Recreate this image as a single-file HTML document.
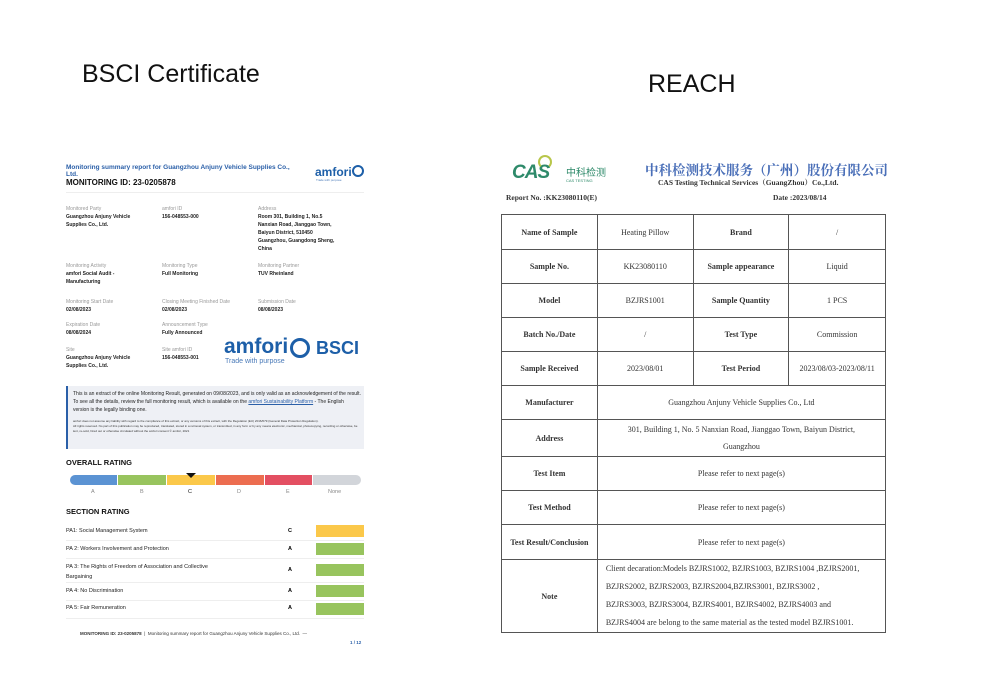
<!DOCTYPE html>
<html><head><meta charset="utf-8"><style>
*{margin:0;padding:0;box-sizing:border-box}
body{width:988px;height:694px;background:#fff;position:relative;overflow:hidden;font-family:"Liberation Sans",sans-serif}
.a{position:absolute;white-space:nowrap}
.s{font-size:5px;color:#222;font-weight:bold;line-height:8px}
.l{font-size:5px;color:#999;line-height:8px}
.sf{font-family:"Liberation Serif","Noto Serif CJK SC",serif}
table{border-collapse:collapse;position:absolute;left:501px;top:214px;width:385px}
td{border:1px solid #555;font-family:"Liberation Serif",serif;font-size:8px;text-align:center;color:#333}
td.b{font-weight:bold}
</style></head><body>
<div class="a" style="left:82px;top:60px;font-size:25px;color:#111">BSCI Certificate</div>
<div class="a" style="left:648px;top:70px;font-size:25px;color:#111">REACH</div>

<div class="a" style="left:66px;top:164px;font-size:6.5px;color:#2a5fa8;font-weight:bold;line-height:7px">Monitoring summary report for Guangzhou Anjuny Vehicle Supplies Co.,<br>Ltd.</div>
<div class="a" style="left:66px;top:178px;font-size:8px;color:#111;font-weight:bold">MONITORING ID: 23-0205878</div>
<div class="a" style="left:315px;top:165px;font-size:12px;color:#1d5fa8;font-weight:bold">amfori</div>
<div class="a" style="left:352px;top:165px;width:12px;height:12px;border:2px solid #1d5fa8;border-radius:50%"></div>
<div class="a" style="left:316px;top:178px;font-size:3px;color:#4a7ab8">Trade with purpose</div>
<div class="a" style="left:66px;top:192px;width:298px;height:1px;background:#eee"></div>

<div class="a l" style="left:66px;top:205px">Monitored Party</div>
<div class="a s" style="left:66px;top:213px">Guangzhou Anjuny Vehicle<br>Supplies Co., Ltd.</div>
<div class="a l" style="left:162px;top:205px">amfori ID</div>
<div class="a s" style="left:162px;top:213px">156-048553-000</div>
<div class="a l" style="left:258px;top:205px">Address</div>
<div class="a s" style="left:258px;top:213px">Room 301, Building 1, No.5<br>Nanxian Road, Jianggao Town,<br>Baiyun District, 510450<br>Guangzhou, Guangdong Sheng,<br>China</div>
<div class="a l" style="left:66px;top:262px">Monitoring Activity</div>
<div class="a s" style="left:66px;top:270px">amfori Social Audit -<br>Manufacturing</div>
<div class="a l" style="left:162px;top:262px">Monitoring Type</div>
<div class="a s" style="left:162px;top:270px">Full Monitoring</div>
<div class="a l" style="left:258px;top:262px">Monitoring Partner</div>
<div class="a s" style="left:258px;top:270px">TUV Rheinland</div>
<div class="a l" style="left:66px;top:298px">Monitoring Start Date</div>
<div class="a s" style="left:66px;top:306px">02/08/2023</div>
<div class="a l" style="left:162px;top:298px">Closing Meeting Finished Date</div>
<div class="a s" style="left:162px;top:306px">02/08/2023</div>
<div class="a l" style="left:258px;top:298px">Submission Date</div>
<div class="a s" style="left:258px;top:306px">08/08/2023</div>
<div class="a l" style="left:66px;top:321px">Expiration Date</div>
<div class="a s" style="left:66px;top:329px">08/08/2024</div>
<div class="a l" style="left:162px;top:321px">Announcement Type</div>
<div class="a s" style="left:162px;top:329px">Fully Announced</div>
<div class="a l" style="left:66px;top:346px">Site</div>
<div class="a s" style="left:66px;top:354px">Guangzhou Anjuny Vehicle<br>Supplies Co., Ltd.</div>
<div class="a l" style="left:162px;top:346px">Site amfori ID</div>
<div class="a s" style="left:162px;top:354px">156-048553-001</div>
<div class="a" style="left:224px;top:335px;font-size:21px;color:#1d5fa8;font-weight:bold">amfori</div>
<div class="a" style="left:290px;top:338px;width:20px;height:20px;border:3px solid #1d5fa8;border-radius:50%"></div>
<div class="a" style="left:316px;top:338px;font-size:18px;color:#1d5fa8;font-weight:bold">BSCI</div>
<div class="a" style="left:225px;top:358px;font-size:7px;color:#4a7ab8">Trade with purpose</div>

<div class="a" style="left:66px;top:386px;width:298px;height:63px;background:#eef0f5;border-left:2px solid #2a5fa8"></div>
<div class="a" style="left:73px;top:390px;font-size:5px;color:#222;line-height:8px;white-space:normal;width:288px">This is an extract of the online Monitoring Result, generated on 09/08/2023, and is only valid as an acknowledgement of the result. To see all the details, review the full monitoring result, which is available on the <span style="color:#2a5fa8;text-decoration:underline">amfori Sustainability Platform</span> - The English version is the legally binding one.</div>
<div class="a" style="left:73px;top:419px;font-size:3px;color:#333;line-height:5px;white-space:normal;width:288px">amfori does not assume any liability with regard to the compliance of this extract, or any versions of this extract, with the Regulation (EU) 2016/679 (General Data Protection Regulation).<br>All rights reserved. No part of this publication may be reproduced, translated, stored in a retrieval system, or transmitted, in any form or by any means electronic, mechanical, photocopying, recording or otherwise, be lent, re-sold, hired out or otherwise circulated without the amfori consent © amfori, 2021</div>

<div class="a" style="left:66px;top:458px;font-size:7.5px;font-weight:bold;color:#111">OVERALL RATING</div>
<div class="a" style="left:70px;top:475px;width:47px;height:10px;background:#5b93d3;border-radius:5px 0 0 5px"></div>
<div class="a" style="left:118px;top:475px;width:48px;height:10px;background:#98c45e"></div>
<div class="a" style="left:167px;top:475px;width:48px;height:10px;background:#fbc84a"></div>
<div class="a" style="left:216px;top:475px;width:48px;height:10px;background:#ec6d50"></div>
<div class="a" style="left:265px;top:475px;width:47px;height:10px;background:#e34f62"></div>
<div class="a" style="left:313px;top:475px;width:48px;height:10px;background:#d2d5da;border-radius:0 5px 5px 0"></div>
<div class="a" style="left:186px;top:473px;border-left:5px solid transparent;border-right:5px solid transparent;border-top:5px solid #111;width:0"></div>
<div class="a" style="left:91px;top:489px;font-size:5.5px;color:#888">A</div>
<div class="a" style="left:140px;top:489px;font-size:5.5px;color:#888">B</div>
<div class="a" style="left:188px;top:489px;font-size:5.5px;color:#111">C</div>
<div class="a" style="left:237px;top:489px;font-size:5.5px;color:#888">D</div>
<div class="a" style="left:286px;top:489px;font-size:5.5px;color:#888">E</div>
<div class="a" style="left:328px;top:489px;font-size:5.5px;color:#888">None</div>
<div class="a" style="left:66px;top:507px;font-size:7.5px;font-weight:bold;color:#111">SECTION RATING</div>

<div class="a" style="left:66px;top:528px;font-size:5.5px;color:#222">PA1: Social Management System</div>
<div class="a" style="left:288px;top:528px;font-size:5.5px;font-weight:bold">C</div>
<div class="a" style="left:316px;top:525px;width:48px;height:12px;background:#fbc84a"></div>
<div class="a" style="left:66px;top:540px;width:298px;height:1px;background:#eee"></div>
<div class="a" style="left:66px;top:546px;font-size:5.5px;color:#222">PA 2: Workers Involvement and Protection</div>
<div class="a" style="left:288px;top:546px;font-size:5.5px;font-weight:bold">A</div>
<div class="a" style="left:316px;top:543px;width:48px;height:12px;background:#98c45e"></div>
<div class="a" style="left:66px;top:558px;width:298px;height:1px;background:#eee"></div>
<div class="a" style="left:66px;top:562px;font-size:5.5px;color:#222;line-height:10px">PA 3: The Rights of Freedom of Association and Collective<br>Bargaining</div>
<div class="a" style="left:288px;top:567px;font-size:5.5px;font-weight:bold">A</div>
<div class="a" style="left:316px;top:564px;width:48px;height:12px;background:#98c45e"></div>
<div class="a" style="left:66px;top:582px;width:298px;height:1px;background:#eee"></div>
<div class="a" style="left:66px;top:588px;font-size:5.5px;color:#222">PA 4: No Discrimination</div>
<div class="a" style="left:288px;top:588px;font-size:5.5px;font-weight:bold">A</div>
<div class="a" style="left:316px;top:585px;width:48px;height:12px;background:#98c45e"></div>
<div class="a" style="left:66px;top:600px;width:298px;height:1px;background:#eee"></div>
<div class="a" style="left:66px;top:605px;font-size:5.5px;color:#222">PA 5: Fair Remuneration</div>
<div class="a" style="left:288px;top:605px;font-size:5.5px;font-weight:bold">A</div>
<div class="a" style="left:316px;top:603px;width:48px;height:12px;background:#98c45e"></div>
<div class="a" style="left:66px;top:618px;width:298px;height:1px;background:#eee"></div>
<div class="a" style="left:80px;top:631px;font-size:4.5px;color:#333"><b>MONITORING ID: 23-0205878</b> &nbsp;| &nbsp;Monitoring summary report for Guangzhou Anjuny Vehicle Supplies Co., Ltd. &nbsp;—</div>
<div class="a" style="left:350px;top:640px;font-size:4.5px;color:#2a5fa8;font-weight:bold">1 / 12</div>

<!-- REACH -->
<div class="a" style="left:512px;top:162px;font-size:19px;color:#2e8a6a;font-weight:bold;font-style:italic;letter-spacing:-1px">CAS</div>
<div class="a" style="left:538px;top:155px;width:14px;height:14px;border:2px solid #b8c64a;border-radius:50%;border-bottom-color:transparent"></div>
<div class="a" style="left:566px;top:164px;font-size:10px;color:#2e8a6a;font-family:'Noto Sans CJK SC',sans-serif">中科检测</div>
<div class="a" style="left:566px;top:178px;font-size:4px;color:#2e8a6a">CAS TESTING</div>
<div class="a sf" style="left:645px;top:159px;font-size:13.5px;color:#4a6fb8;font-weight:bold">中科检测技术服务（广州）股份有限公司</div>
<div class="a sf" style="left:658px;top:177px;font-size:7.5px;color:#333;font-weight:bold">CAS Testing Technical Services（GuangZhou）Co.,Ltd.</div>
<div class="a sf" style="left:506px;top:193px;font-size:7.5px;color:#333;font-weight:bold">Report No. :KK23080110(E)</div>
<div class="a sf" style="left:773px;top:193px;font-size:7.5px;color:#333;font-weight:bold">Date :2023/08/14</div>
<table>
<tr style="height:35px"><td class="b" style="width:96px">Name of Sample</td><td style="width:96px">Heating Pillow</td><td class="b" style="width:96px">Brand</td><td style="width:97px">/</td></tr>
<tr style="height:34px"><td class="b">Sample No.</td><td>KK23080110</td><td class="b">Sample appearance</td><td>Liquid</td></tr>
<tr style="height:34px"><td class="b">Model</td><td>BZJRS1001</td><td class="b">Sample Quantity</td><td>1 PCS</td></tr>
<tr style="height:34px"><td class="b">Batch No./Date</td><td>/</td><td class="b">Test Type</td><td>Commission</td></tr>
<tr style="height:34px"><td class="b">Sample Received</td><td>2023/08/01</td><td class="b">Test Period</td><td>2023/08/03-2023/08/11</td></tr>
<tr style="height:34px"><td class="b">Manufacturer</td><td colspan="3">Guangzhou Anjuny Vehicle Supplies Co., Ltd</td></tr>
<tr style="height:37px"><td class="b">Address</td><td colspan="3" style="line-height:17px">301, Building 1, No. 5 Nanxian Road, Jianggao Town, Baiyun District,<br>Guangzhou</td></tr>
<tr style="height:34px"><td class="b">Test Item</td><td colspan="3">Please refer to next page(s)</td></tr>
<tr style="height:34px"><td class="b">Test Method</td><td colspan="3">Please refer to next page(s)</td></tr>
<tr style="height:35px"><td class="b">Test Result/Conclusion</td><td colspan="3">Please refer to next page(s)</td></tr>
<tr style="height:72px"><td class="b">Note</td><td colspan="3" style="text-align:left;padding-left:8px;line-height:18px">Client decaration:Models BZJRS1002, BZJRS1003, BZJRS1004 ,BZJRS2001,<br>BZJRS2002, BZJRS2003, BZJRS2004,BZJRS3001, BZJRS3002 ,<br>BZJRS3003, BZJRS3004, BZJRS4001, BZJRS4002, BZJRS4003 and<br>BZJRS4004 are belong to the same material as the tested model BZJRS1001.</td></tr>
</table>
</body></html>
